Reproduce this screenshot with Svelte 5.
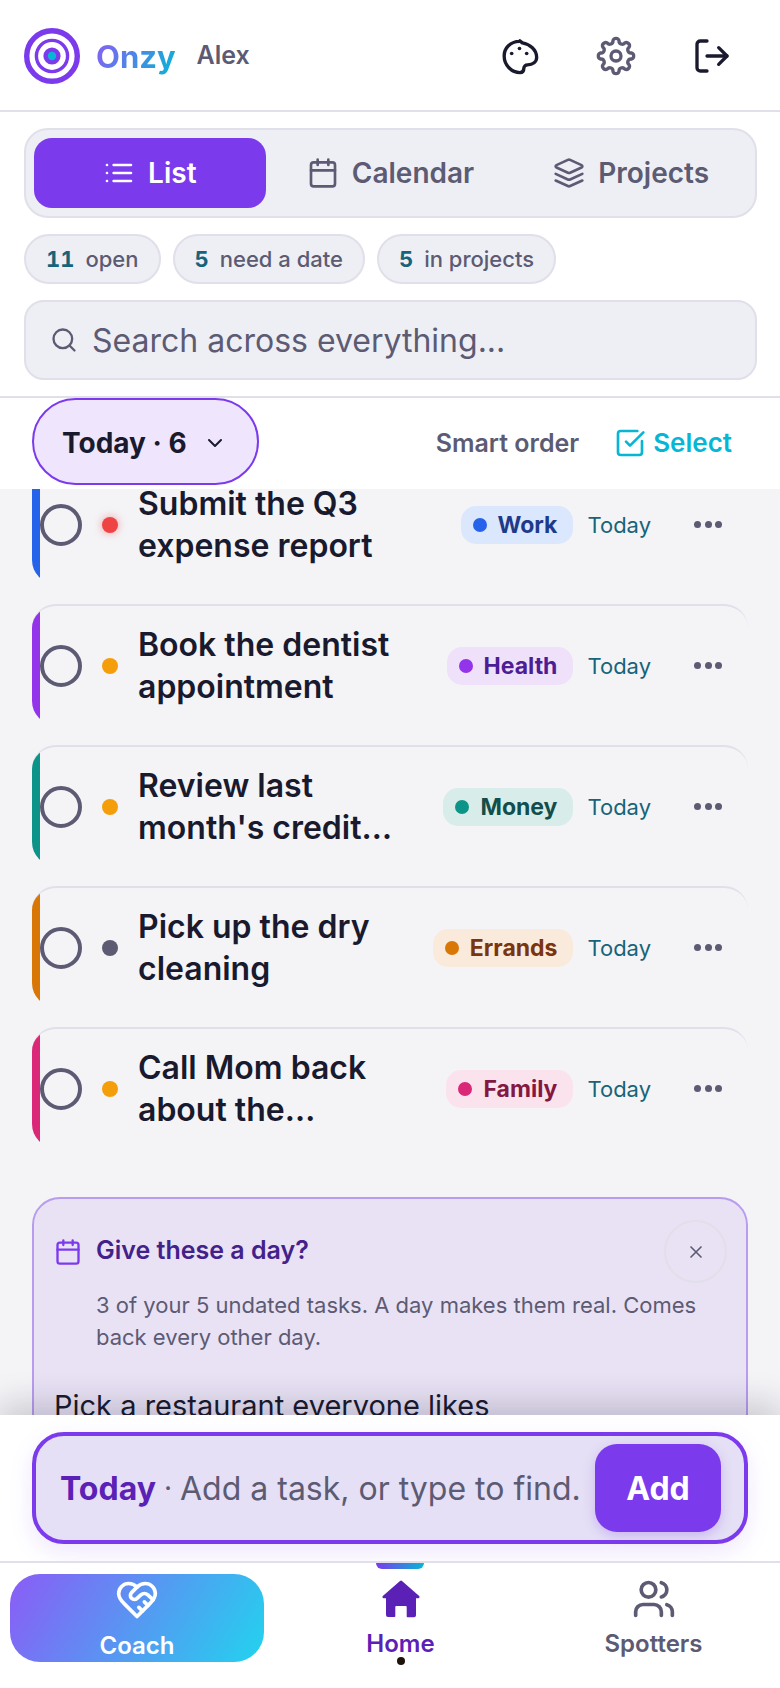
<script>
  const tasks = [
    { title: "Submit the Q3 expense report", tag: "Work", kind: "work", priority: "high" },
    { title: "Book the dentist appointment", tag: "Health", kind: "health", priority: "medium" },
    { title: "Review last month's credit card statement", tag: "Money", kind: "money", priority: "medium" },
    { title: "Pick up the dry cleaning", tag: "Errands", kind: "errands", priority: "low" },
    { title: "Call Mom back about the weekend plans", tag: "Family", kind: "family", priority: "medium" }
  ];

  const stats = [
    { count: 11, label: "open" },
    { count: 5, label: "need a date" },
    { count: 5, label: "in projects" }
  ];

  // eight-lobed gear outline, 24 unit box
  const gearPath = (() => {
    const point = i => {
      const angle = ((i * 22.5 - 101.25) * Math.PI) / 180;
      return `${(12 + 9.4 * Math.cos(angle)).toFixed(2)} ${(12 + 9.4 * Math.sin(angle)).toFixed(2)}`;
    };
    let d = `M${point(0)}`;
    for (let i = 1; i <= 16; i++) {
      d += `A1.9 1.9 0 0 ${i % 2 ? 1 : 0} ${point(i)}`;
    }
    return d + "Z";
  })();
</script>

<div class="page">
  <header class="top">
    <div class="brand">
      <svg class="logo" viewBox="0 0 56 56" aria-hidden="true">
        <circle cx="28" cy="28" r="25.3" fill="none" stroke="#7c3aed" stroke-width="5.4" />
        <circle cx="28" cy="28" r="15.6" fill="none" stroke="#7c3aed" stroke-width="3.4" />
        <circle cx="28" cy="28" r="8.6" fill="#7c3aed" />
        <circle cx="28" cy="28" r="4.2" fill="#06b6d4" />
      </svg>
      <span class="name">Onzy</span>
      <span class="user">Alex</span>
    </div>
    <div class="actions">
      <svg class="ic40 dark" viewBox="0 0 24 24">
        <path d="M11.600 3.200C6.200 3.400 2.500 7.200 2.500 12c0 5.500 4.500 10 9.500 10 1.700 0 2.300-1.300 2.300-2.600 0-1.200.9-2.100 2.200-2.100 3.300 0 5.500-1.800 5.500-4.500 0-4.500-4-7.900-8.600-8.700l-1.500-1.200z" />
        <circle class="dot" cx="11.700" cy="7.500" r="1.100" />
        <circle class="dot" cx="16" cy="10.500" r="1.100" />
        <circle class="dot" cx="7" cy="10.500" r="1.100" />
      </svg>
      <svg class="ic40 grey" viewBox="0 0 24 24">
        <path d={gearPath} />
        <circle cx="12" cy="12" r="3" />
      </svg>
      <svg class="ic40 dark" viewBox="0 0 24 24">
        <path d="M9 21H5a2 2 0 0 1-2-2V5a2 2 0 0 1 2-2h4" />
        <path d="m16 17 5-5-5-5" />
        <path d="M21 12H9" />
      </svg>
    </div>
  </header>

  <section class="controls">
    <nav class="tabs">
      <button class="tab active">
        <svg class="ic32" viewBox="0 0 24 24"><path d="M3 12h.01M3 18h.01M3 6h.01M8 12h13M8 18h13M8 6h13" /></svg>
        List
      </button>
      <button class="tab">
        <svg class="ic32" viewBox="0 0 24 24"><path d="M8 2v4M16 2v4M3 10h18" /><rect x="3" y="4" width="18" height="18" rx="2" /></svg>
        Calendar
      </button>
      <button class="tab">
        <svg class="ic32" viewBox="0 0 24 24">
          <path d="m12.83 2.18a2 2 0 0 0-1.66 0L2.6 6.08a1 1 0 0 0 0 1.83l8.58 3.91a2 2 0 0 0 1.66 0l8.58-3.9a1 1 0 0 0 0-1.83Z" />
          <path d="m22 17.65-9.17 4.16a2 2 0 0 1-1.66 0L2 17.65" />
          <path d="m22 12.65-9.17 4.16a2 2 0 0 1-1.66 0L2 12.65" />
        </svg>
        Projects
      </button>
    </nav>

    <div class="stats">
      {#each stats as stat}
        <span class="stat"><b>{stat.count}</b>{stat.label}</span>
      {/each}
    </div>

    <label class="search">
      <svg class="ic28" viewBox="0 0 24 24"><circle cx="11" cy="11" r="8" /><path d="m21 21-4.3-4.3" /></svg>
      <input type="text" placeholder="Search across everything..." />
    </label>
  </section>

  <section class="toolbar">
    <button class="filter">
      Today · 6
      <svg class="ic24" viewBox="0 0 24 24"><path d="m6 9 6 6 6-6" /></svg>
    </button>
    <div class="tools">
      <span class="order">Smart order</span>
      <span class="select">
        <svg class="ic32" viewBox="0 0 24 24">
          <path d="M21 10.5V19a2 2 0 0 1-2 2H5a2 2 0 0 1-2-2V5a2 2 0 0 1 2-2h12.5" />
          <path d="m9 11 3 3L22 4" />
        </svg>
        Select
      </span>
    </div>
  </section>

  <main class="content">
    <div class="list">
      {#each tasks as task}
        <article class="row {task.kind}">
          <span class="check"></span>
          <span class="priority {task.priority}"></span>
          <h3 class="title">{task.title}</h3>
          <span class="tag"><i></i>{task.tag}</span>
          <span class="due">Today</span>
          <span class="more"><i></i><i></i><i></i></span>
        </article>
      {/each}
    </div>

    <aside class="nudge">
      <div class="nudge-head">
        <svg class="ic28" viewBox="0 0 24 24"><path d="M8 2v4M16 2v4M3 10h18" /><rect x="3" y="4" width="18" height="18" rx="2" /></svg>
        <h4>Give these a day?</h4>
        <button class="close" aria-label="Dismiss">
          <svg class="ic20" viewBox="0 0 24 24"><path d="M18 6 6 18M6 6l12 12" /></svg>
        </button>
      </div>
      <p>3 of your 5 undated tasks. A day makes them real. Comes back every other day.</p>
      <div class="pick">Pick a restaurant everyone likes</div>
    </aside>
  </main>

  <section class="composer-wrap">
    <div class="composer">
      <span class="when">Today</span>
      <span class="sep">·</span>
      <span class="hint">Add a task, or type to find.</span>
      <button class="add">Add</button>
    </div>
  </section>

  <nav class="bottom">
    <span class="bar"></span>
    <button class="item coach">
      <svg class="ic44" viewBox="0 0 24 24">
        <path d="M19 14c1.49-1.46 3-3.21 3-5.5A5.5 5.5 0 0 0 16.5 3c-1.76 0-3 .5-4.5 2-1.5-1.5-2.74-2-4.5-2A5.5 5.5 0 0 0 2 8.5c0 2.3 1.5 4.05 3 5.5l7 7Z" />
        <path d="M12 5 9.04 7.96a2.17 2.17 0 0 0 0 3.08c.82.82 2.13.85 3 .07l2.07-1.9a2.82 2.82 0 0 1 3.79 0l2.96 2.66" />
        <path d="m18 15-2-2M15 18l-2-2" />
      </svg>
      <span class="label">Coach</span>
    </button>
    <button class="item home">
      <svg class="ic44 solid" viewBox="0 0 44 44">
        <path d="M22 3.5a1.5 1.5 0 0 1 1 .4l17.2 15.2c.8.8.3 2.1-.8 2.1H37v17a2 2 0 0 1-2 2h-6.500a.8.8 0 0 1-.8-.8V30a1 1 0 0 0-1-1h-9.400a1 1 0 0 0-1 1v9.200a.8.8 0 0 1-.8.8H9a2 2 0 0 1-2-2V21.200H4.600c-1.100 0-1.600-1.300-.8-2.100L21 3.900a1.500 1.500 0 0 1 1-.4z" />
      </svg>
      <span class="label">Home</span>
      <span class="here"></span>
    </button>
    <button class="item">
      <svg class="ic44" viewBox="0 0 24 24">
        <path d="M16 21v-2a4 4 0 0 0-4-4H6a4 4 0 0 0-4 4v2" />
        <circle cx="9" cy="7" r="4" />
        <path d="M22 21v-2a4 4 0 0 0-3-3.870M16 3.130a4 4 0 0 1 0 7.750" />
      </svg>
      <span class="label">Spotters</span>
    </button>
  </nav>
</div>

<style>
  :global(body) {
    margin: 0;
    background: #fff;
  }
  .page {
    display: flex;
    flex-direction: column;
    width: 780px;
    height: 1688px;
    overflow: hidden;
    font-family: Inter, "Liberation Sans", sans-serif;
    color: #1a1a2e;
    background: #fff;
  }
  button {
    font: inherit;
    border: 0;
    background: none;
    padding: 0;
  }
  svg {
    flex: none;
    fill: none;
    stroke: currentColor;
    stroke-width: 2;
    stroke-linecap: round;
    stroke-linejoin: round;
  }
  .ic44 { width: 44px; height: 44px; }
  .ic40 { width: 40px; height: 40px; }
  .ic32 { width: 32px; height: 32px; }
  .ic28 { width: 28px; height: 28px; }
  .ic24 { width: 24px; height: 24px; }
  .ic20 { width: 20px; height: 20px; }

  .top {
    flex: none;
    box-sizing: border-box;
    display: flex;
    align-items: center;
    justify-content: space-between;
    height: 112px;
    padding: 2px 48px 0 24px;
    border-bottom: 2px solid #e0dfea;
  }
  .brand {
    display: flex;
    align-items: center;
  }
  .logo {
    width: 56px;
    height: 56px;
    stroke: none;
  }
  .name {
    margin-left: 16px;
    font-size: 31px;
    font-weight: 700;
    background: linear-gradient(120deg, #8b5cf6, #06b6d4);
    -webkit-background-clip: text;
    background-clip: text;
    color: transparent;
  }
  .user {
    margin: 0 0 2px 21px;
    font-size: 25px;
    font-weight: 600;
    color: #5c5b73;
  }
  .actions {
    display: flex;
    gap: 56px;
  }
  .dark { color: #1a1a2e; }
  .grey { color: #5c5b73; }
  .dot { fill: currentColor; stroke: none; }

  .controls {
    flex: none;
    display: flex;
    flex-direction: column;
    padding: 16px 23px 16px 24px;
    border-bottom: 2px solid #e0dfea;
  }
  .tabs {
    display: grid;
    grid-template-columns: repeat(3, 1fr);
    gap: 9px;
    padding: 8px;
    background: #eeeff4;
    border: 2px solid #e0dfea;
    border-radius: 24px;
  }
  .tab {
    display: flex;
    align-items: center;
    justify-content: center;
    gap: 13px;
    height: 70px;
    border-radius: 18px;
    font-size: 28px;
    font-weight: 600;
    color: #5c5b73;
  }
  .tab.active {
    background: #7c3aed;
    color: #fff;
  }
  .stats {
    display: flex;
    gap: 12px;
    margin-top: 16px;
  }
  .stat {
    display: flex;
    align-items: center;
    gap: 11px;
    height: 46px;
    padding: 0 20px;
    background: #eeeff4;
    border: 2px solid #e0dfea;
    border-radius: 25px;
    font-size: 22px;
    font-weight: 500;
    color: #5c5b73;
  }
  .stat b {
    font-weight: 700;
    font-variant-numeric: tabular-nums;
    color: #17647a;
  }
  .search {
    display: flex;
    align-items: center;
    gap: 14px;
    height: 76px;
    margin-top: 16px;
    padding: 0 24px;
    background: #eeeff4;
    border: 2px solid #e0dfea;
    border-radius: 20px;
    color: #5c5b73;
  }
  .search input {
    flex: 1;
    min-width: 0;
    border: 0;
    outline: 0;
    padding: 0;
    background: none;
    font: inherit;
    font-size: 32px;
    color: #1a1a2e;
  }
  .search input::placeholder {
    color: #5c5b73;
    opacity: 1;
  }

  .toolbar {
    position: relative;
    z-index: 2;
    flex: none;
    display: flex;
    align-items: flex-start;
    justify-content: space-between;
    height: 91px;
    padding: 0 48px 0 32px;
    background: #fff;
  }
  .filter {
    display: flex;
    align-items: center;
    gap: 16px;
    height: 87px;
    padding: 2px 30px 0 28px;
    box-sizing: border-box;
    background: #efe6fd;
    border: 2px solid #7c3aed;
    border-radius: 44px;
    font-size: 28px;
    font-weight: 700;
    color: #1a1a2e;
  }
  .tools {
    display: flex;
    align-items: center;
    gap: 35px;
    height: 87px;
    padding-top: 2px;
    box-sizing: border-box;
  }
  .order {
    font-size: 25px;
    font-weight: 600;
    color: #5c5b73;
  }
  .select {
    display: flex;
    align-items: center;
    gap: 7px;
    font-size: 26px;
    font-weight: 600;
    color: #06b6d4;
  }

  .content {
    flex: 1;
    min-height: 0;
    overflow: hidden;
    padding: 0 32px;
    background: #f4f4f7;
  }
  .list {
    display: flex;
    flex-direction: column;
    gap: 20px;
    margin-top: -26px;
  }
  .row {
    position: relative;
    box-sizing: border-box;
    display: flex;
    align-items: center;
    height: 121px;
    padding-left: 8px;
    overflow: hidden;
    border-top: 2px solid #e0dfea;
    border-radius: 24px;
  }
  .row::before {
    content: "";
    position: absolute;
    left: 0;
    top: 0;
    bottom: 0;
    width: 8px;
    background: var(--accent);
  }
  .work { --accent: #2563eb; --tag-bg: #dbe7fc; --tag-ink: #1e3a8a; }
  .health { --accent: #9333ea; --tag-bg: #f0e1fb; --tag-ink: #4c1d95; }
  .money { --accent: #0d9488; --tag-bg: #d8ece9; --tag-ink: #134e4a; }
  .errands { --accent: #d97706; --tag-bg: #faeadb; --tag-ink: #78350f; }
  .family { --accent: #db2777; --tag-bg: #fbe3ee; --tag-ink: #831843; }
  .check {
    flex: none;
    box-sizing: border-box;
    width: 42px;
    height: 42px;
    border: 4px solid #5c5b73;
    border-radius: 50%;
  }
  .priority {
    flex: none;
    width: 16px;
    height: 16px;
    margin-left: 20px;
    border-radius: 50%;
  }
  .priority.high {
    background: #ef4444;
    box-shadow: 0 0 8px rgba(239, 68, 68, 0.5);
  }
  .priority.medium { background: #f59e0b; }
  .priority.low { background: #5c5b73; }
  .title {
    flex: 1;
    min-width: 0;
    margin: 0 14px 0 20px;
    font-size: 32px;
    font-weight: 600;
    line-height: 42px;
    display: -webkit-box;
    -webkit-box-orient: vertical;
    -webkit-line-clamp: 2;
    line-clamp: 2;
    overflow: hidden;
  }
  .tag {
    flex: none;
    display: flex;
    align-items: center;
    gap: 11px;
    height: 38px;
    padding: 0 16px 0 12px;
    background: var(--tag-bg);
    border-radius: 15px;
    font-size: 23px;
    font-weight: 700;
    color: var(--tag-ink);
  }
  .tag i {
    width: 14px;
    height: 14px;
    border-radius: 50%;
    background: var(--accent);
  }
  .due {
    flex: none;
    margin-left: 14px;
    font-size: 22px;
    color: #17647a;
  }
  .more {
    flex: none;
    display: flex;
    gap: 3.5px;
    margin: 0 26px 0 43px;
  }
  .more i {
    width: 7px;
    height: 7px;
    border-radius: 50%;
    background: #5c5b73;
  }

  .nudge {
    margin-top: 49px;
    padding: 21px 19px 0 20px;
    height: 300px;
    background: #e9e2f5;
    border: 2px solid #b79cf0;
    border-radius: 28px;
  }
  .nudge-head {
    display: flex;
    align-items: center;
    color: #7c3aed;
  }
  .nudge-head h4 {
    flex: 1;
    margin: 0 0 4px 14px;
    font-size: 25px;
    font-weight: 600;
    color: #43218a;
  }
  .close {
    display: flex;
    align-items: center;
    justify-content: center;
    box-sizing: border-box;
    width: 63px;
    height: 63px;
    border: 2px solid #e2dfea;
    border-radius: 50%;
    color: #5c5b73;
  }
  .nudge p {
    margin: 6px 0 0 42px;
    font-size: 22px;
    line-height: 32px;
    color: #5c5b73;
  }
  .pick {
    margin-top: 35px;
    font-size: 29px;
    color: #1a1a2e;
  }

  .composer-wrap {
    position: relative;
    z-index: 3;
    flex: none;
    padding: 17px 32px;
    background: #fff;
    box-shadow: 0 -10px 32px rgba(20, 20, 40, 0.2);
  }
  .composer {
    display: flex;
    align-items: center;
    height: 104px;
    padding: 0 23px 0 24px;
    background: #e5e0f5;
    border: 4px solid #7c3aed;
    border-radius: 32px;
    box-shadow: 0 8px 24px rgba(124, 58, 237, 0.12);
  }
  .when {
    font-size: 32px;
    font-weight: 700;
    color: #5b21b6;
  }
  .sep {
    margin: 0 8px;
    font-size: 28px;
    color: #5c5b73;
  }
  .hint {
    flex: 1;
    min-width: 0;
    white-space: nowrap;
    font-size: 32px;
    color: #5c5b73;
  }
  .add {
    flex: none;
    width: 126px;
    height: 88px;
    background: #7c3aed;
    border-radius: 22px;
    box-shadow: 0 4px 12px rgba(124, 58, 237, 0.25);
    font-size: 32px;
    font-weight: 700;
    color: #fff;
  }

  .bottom {
    position: relative;
    z-index: 3;
    flex: none;
    display: grid;
    grid-template-columns: 264px 253px 253px;
    height: 127px;
    padding: 11px 0 0 10px;
    box-sizing: border-box;
    border-top: 2px solid #e0dfea;
    background: #fff;
  }
  .bar {
    position: absolute;
    top: 0;
    left: 376px;
    width: 48px;
    height: 6px;
    border-radius: 0 0 8px 8px;
    background: linear-gradient(90deg, #7c3aed, #06b6d4);
  }
  .item {
    position: relative;
    display: flex;
    flex-direction: column;
    align-items: center;
    height: 88px;
    padding-top: 3px;
    box-sizing: border-box;
    font-size: 24px;
    font-weight: 600;
    line-height: 29px;
    color: #5c5b73;
  }
  .label {
    margin-top: 8px;
  }
  .coach {
    width: 254px;
    border-radius: 30px;
    background: linear-gradient(120deg, #8b5cf6, #22d3ee);
    color: #fff;
    padding-top: 4px;
  }
  .coach .label {
    margin-top: 9px;
  }
  .home { color: #5b21b6; }
  .solid {
    fill: currentColor;
    stroke: none;
  }
  .here {
    position: absolute;
    left: 50%;
    top: 83px;
    width: 8px;
    height: 8px;
    margin-left: -4px;
    border-radius: 50%;
    background: #1f120a;
  }
</style>
